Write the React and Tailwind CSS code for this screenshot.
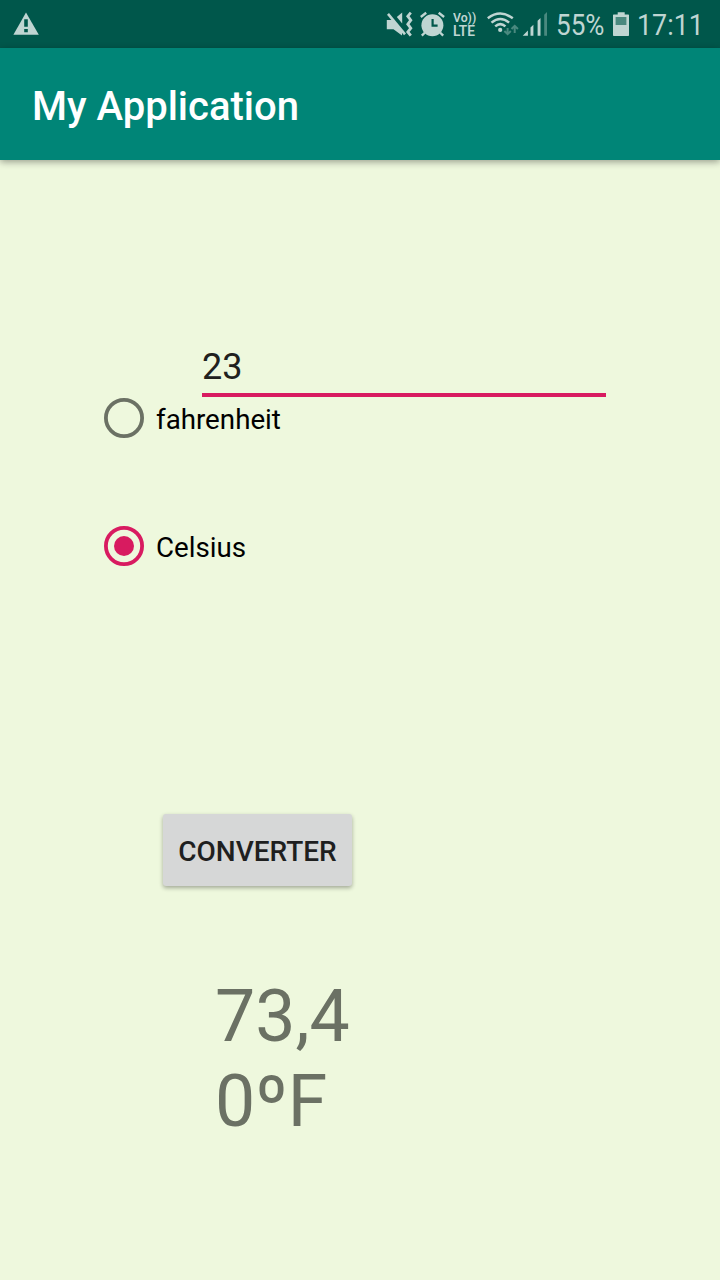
function WarningIcon() {
  return (
    <svg className="h-12 w-[26px]" viewBox="13 0 26 48">
      <path d="M26 12.5 L38.8 34.8 H13.4 Z" fill="#bfd5d2" />
      <path d="M24.2 19.3h3.6v7.5h-3.6zM24.2 29h3.6v3.2h-3.6z" fill="#00574b" />
    </svg>
  );
}

function MuteIcon() {
  return (
    <svg className="ml-[347px] h-12 w-[27px]" viewBox="386 0 27 48">
      <g fill="#bfd5d2">
        <path d="M386.8 20h6.4L402 30.5V35.5L393.5 29.2H386.8z" />
        <path d="M396.8 17 402.2 12.5V23.4z" />
      </g>
      <path d="M388 13.8 405 34.4" stroke="#bfd5d2" strokeWidth="2.6" />
      <path d="M410.8 12.7 407.8 16.2 410.8 20.2 407.8 24.2 410.8 28.2 407.8 32 410.8 35.6" fill="none" stroke="#bfd5d2" strokeWidth="2.8" />
    </svg>
  );
}

function AlarmIcon() {
  return (
    <svg className="ml-[7px] h-12 w-[26px]" viewBox="420 0 26 48">
      <circle cx="432.4" cy="25.2" r="11" fill="#bfd5d2" />
      <path d="M432.6 19v6.6h5" fill="none" stroke="#00574b" strokeWidth="2.2" />
      <path d="M420.8 17 426.2 12.8M438.7 12.8 444.1 17M425 32.5 421.8 35.6M440 32.5 443.2 35.6" stroke="#bfd5d2" strokeWidth="2.4" />
    </svg>
  );
}

function WifiIcon() {
  return (
    <svg className="ml-[8px] h-12 w-8" viewBox="487 0 32 48">
      <g fill="none" stroke="#bfd5d2" strokeWidth="2.5">
        <path d="M487.8 18.3Q500.3 8.8 512.8 18.3" />
        <path d="M491.5 22.6Q500.3 15.4 509.1 22.6" />
        <path d="M495.2 26.4Q500.3 21.8 505.4 26.4" />
      </g>
      <circle cx="500.2" cy="29.9" r="2.1" fill="#bfd5d2" />
      <path d="M507.6 28v6M504.4 31l3.2 3.2 3.2-3.2M514.7 33v-7M511.5 29l3.2-3.2 3.2 3.2" fill="none" stroke="#4a897f" strokeWidth="2" />
    </svg>
  );
}

function SignalIcon() {
  return (
    <svg className="ml-[3px] h-12 w-[26px]" viewBox="522 0 26 48">
      <path d="M522.7 35.7 527.9 30.5v5.2zM530.5 27.5l2.9-2.7v10.9h-2.9zM537.6 20.8l2.9-2.7v17.6h-2.9z" fill="#bfd5d2" />
      <path d="M544.2 14.8l2.8-2.7v23.6h-2.8z" fill="#4a897f" />
    </svg>
  );
}

function BatteryIcon() {
  return (
    <svg className="h-12 w-4" viewBox="613 0 16 48">
      <path d="M617.7 12.2h7v2.2h3.6q.7 0 .7.7v20.1q0 .8-.8.8h-14.4q-.8 0-.8-.8V15.1q0-.7.7-.7h4z" fill="#bfd5d2" />
      <path d="M615.6 17h10.8v8h-10.8z" fill="#4a897f" />
    </svg>
  );
}

function Radio({ label, checked }) {
  return (
    <div className="flex h-10 items-center" role="radio" aria-checked={checked}>
      <svg className="h-10 w-10" viewBox="0 0 40 40">
        <circle cx="20" cy="20" r="18.1" fill="none" stroke={checked ? "#d81b60" : "#6b7164"} strokeWidth="3.8" />
        {checked && <circle cx="20" cy="20" r="10" fill="#d81b60" />}
      </svg>
      <span className="ml-3 origin-left scale-x-[.99] pt-[3px] text-[28px] leading-8 text-black">{label}</span>
    </div>
  );
}

export default function App() {
  return (
    <div className="h-[1280px] w-[720px] overflow-hidden bg-[#eef8dd] font-[Roboto,sans-serif]">
      <div className="flex h-12 bg-[#00574b] pl-[13px] text-[#bfd5d2]">
        <WarningIcon />
        <MuteIcon />
        <AlarmIcon />
        <div className="ml-[7px] flex w-[26px] flex-col pt-[11px] font-semibold">
          <span className="h-[13px] w-max origin-left scale-x-[.98] text-[12.5px] leading-[13px] whitespace-nowrap">Vo))</span>
          <span className="h-[14px] w-max origin-left scale-x-[.98] text-[14px] leading-[14px]">LTE</span>
        </div>
        <WifiIcon />
        <SignalIcon />
        <span className="ml-[8px] w-[57px] origin-left scale-x-[.87] text-[30px] leading-[50px]">55%</span>
        <BatteryIcon />
        <span className="ml-[8px] w-[76px] origin-left scale-x-[.895] text-[30px] leading-[50px]">17:11</span>
      </div>
      <header className="h-28 bg-[#008577] pl-8 shadow-[0_2px_7px_rgba(0,0,0,0.36)]">
        <h1 className="text-[40px] leading-[118px] font-medium text-white">My Application</h1>
      </header>
      <main className="flex flex-col items-start">
        <div className="mt-[182px] ml-[202px] h-[55px] w-[404px] border-b-4 border-[#d81b60] text-[36px] leading-[50px] text-[#20211e]">23</div>
        <div className="mt-px ml-[104px] flex flex-col gap-[88px]" role="radiogroup">
          <Radio label="fahrenheit" checked={false} />
          <Radio label="Celsius" checked />
        </div>
        <button className="mt-[248px] ml-[163px] h-[72px] w-[189px] rounded-[3px] bg-[#d6d7d7] pt-[4px] text-[28px] font-medium text-[#1f1f1f] shadow-[0_2px_4px_rgba(0,0,0,0.32)]">CONVERTER</button>
        <div className="mt-[88px] ml-[215px] w-[150px] origin-left scale-x-[.994] text-[72px] leading-[85px] text-[#6b7164]">
          <div>73,4</div>
          <div>0ºF</div>
        </div>
      </main>
    </div>
  );
}
